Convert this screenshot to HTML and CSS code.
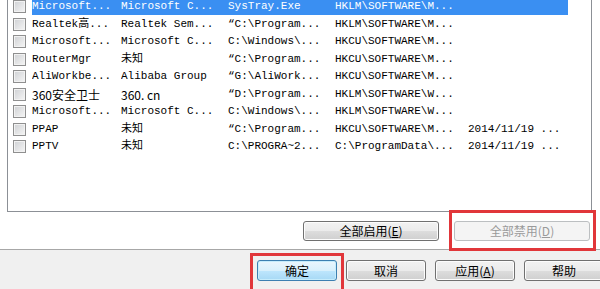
FILE: index.html
```html
<!DOCTYPE html>
<html lang="zh-CN">
<head>
  <meta charset="UTF-8" />
  <title>启动项</title>
  <link rel="stylesheet" href="styles.css">
</head>
<body>
  <div class="dialog">
    <div class="page">
      <div class="list">
        <div class="rows">
          <div class="row selected">
            <span class="check"></span>
            <span class="c1">Microsoft...</span><span class="c2">Microsoft C...</span><span class="c3">SysTray.Exe</span><span class="c4">HKLM\SOFTWARE\M...</span><span class="c5"></span>
          </div>
          <div class="row">
            <span class="check"></span>
            <span class="c1">Realtek高...</span><span class="c2">Realtek Sem...</span><span class="c3">“C:\Program...</span><span class="c4">HKLM\SOFTWARE\M...</span><span class="c5"></span>
          </div>
          <div class="row">
            <span class="check"></span>
            <span class="c1">Microsoft...</span><span class="c2">Microsoft C...</span><span class="c3">C:\Windows\...</span><span class="c4">HKCU\SOFTWARE\M...</span><span class="c5"></span>
          </div>
          <div class="row">
            <span class="check"></span>
            <span class="c1">RouterMgr</span><span class="c2">未知</span><span class="c3">“C:\Program...</span><span class="c4">HKCU\SOFTWARE\M...</span><span class="c5"></span>
          </div>
          <div class="row">
            <span class="check"></span>
            <span class="c1">AliWorkbe...</span><span class="c2">Alibaba Group</span><span class="c3">“G:\AliWork...</span><span class="c4">HKCU\SOFTWARE\M...</span><span class="c5"></span>
          </div>
          <div class="row">
            <span class="check"></span>
            <span class="c1 sans">360安全卫士</span><span class="c2 sans">360. cn</span><span class="c3">“D:\Program...</span><span class="c4">HKLM\SOFTWARE\W...</span><span class="c5"></span>
          </div>
          <div class="row">
            <span class="check"></span>
            <span class="c1">Microsoft...</span><span class="c2">Microsoft C...</span><span class="c3">C:\Windows\...</span><span class="c4">HKLM\SOFTWARE\W...</span><span class="c5"></span>
          </div>
          <div class="row">
            <span class="check"></span>
            <span class="c1">PPAP</span><span class="c2">未知</span><span class="c3">“C:\Program...</span><span class="c4">HKCU\SOFTWARE\M...</span><span class="c5">2014/11/19 ...</span>
          </div>
          <div class="row">
            <span class="check"></span>
            <span class="c1">PPTV</span><span class="c2">未知</span><span class="c3">C:\PROGRA~2...</span><span class="c4">C:\ProgramData\...</span><span class="c5">2014/11/19 ...</span>
          </div>
        </div>
      </div>

      <div class="actions">
        <button class="btn wide">全部启用(<u>E</u>)</button>
        <span class="mark mark-disable">
          <button class="btn wide" disabled>全部禁用(<u>D</u>)</button>
        </span>
      </div>
    </div>

    <div class="footer">
      <span class="mark mark-ok">
        <button class="btn default">确定</button>
      </span>
      <button class="btn">取消</button>
      <button class="btn">应用(<u>A</u>)</button>
      <button class="btn">帮助</button>
    </div>
  </div>
</body>
</html>
```

FILE: styles.css
```css
body {
  margin: 0;
  background: #fff;
}
.dialog {
  width: 600px;
  height: 289px;
  overflow: hidden;
  font-family: "Liberation Mono", "Noto Sans CJK SC", monospace;
  font-size: 11px;
  color: #000;
}
.page {
  height: 249px;
  background: #fff;
  border-bottom: 1px solid #a7a7a7;
}
.list {
  height: 211px;
  margin: 0 8px 0 7px;
  border: 1px solid #8c9096;
  border-top: none;
  overflow: hidden;
}
.rows {
  margin-top: -2px;
}
.row {
  display: flex;
  align-items: center;
  height: 17.5px;
  white-space: nowrap;
}
.check {
  flex: none;
  width: 11px;
  height: 11px;
  margin: 0 6px 0 5px;
  border: 1px solid #8f8f8f;
  background: linear-gradient(135deg, #cfd1d4, #f5f5f5);
  box-shadow: inset 0 0 0 1px #f2f2f2;
}
.row span:not(.check) {
  display: block;
  height: 17px;
  line-height: 17px;
  overflow: hidden;
}
.c1 { width: 89px; }
.c2 { width: 107px; }
.c3 { width: 107px; }
.c4 { width: 133px; }
.c5 { width: 100px; }
.sans {
  font-family: "Noto Sans CJK SC", sans-serif;
  font-size: 12px;
}
.selected span:not(.check) {
  background: #3a8ff2;
  color: #fff;
}
.actions {
  display: flex;
  justify-content: flex-end;
  gap: 15px;
  margin-top: 9px;
  padding-right: 10px;
}
.footer {
  display: flex;
  justify-content: flex-end;
  gap: 9px;
  height: 39px;
  padding-top: 10px;
  margin-right: -4px;
  background: #f0f0f0;
  box-sizing: border-box;
}
.btn {
  width: 80px;
  height: 21px;
  padding: 0;
  font-family: "Noto Sans CJK SC", sans-serif;
  font-size: 12px;
  line-height: 19px;
  color: #000;
  border: 1px solid #707070;
  border-radius: 3px;
  background: linear-gradient(#f2f2f2 0%, #ebebeb 50%, #dddddd 51%, #cfcfcf 100%);
  box-shadow: inset 0 0 0 1px #fcfcfc;
}
.btn.wide {
  width: 136px;
  height: 20px;
  line-height: 18px;
}
.btn:disabled {
  color: #9a9a9a;
  border-color: #bcbfc1;
  background: #f4f4f4;
  box-shadow: none;
}
.btn.default {
  border-color: #3c7fb1;
  background: linear-gradient(#eaf6fd 0%, #d9f0fc 50%, #bee6fd 51%, #a7d9f5 100%);
  box-shadow: inset 0 0 0 1px #c6ecfc;
}
.btn u {
  text-underline-offset: 1px;
}
.mark {
  position: relative;
  display: block;
}
.mark::after {
  content: "";
  position: absolute;
  border: 3px solid #e1363a;
  pointer-events: none;
}
.mark-disable::after {
  inset: -11px -6px -10px -5px;
}
.mark-ok::after {
  inset: -7px -7px -6px -7px;
}
```
